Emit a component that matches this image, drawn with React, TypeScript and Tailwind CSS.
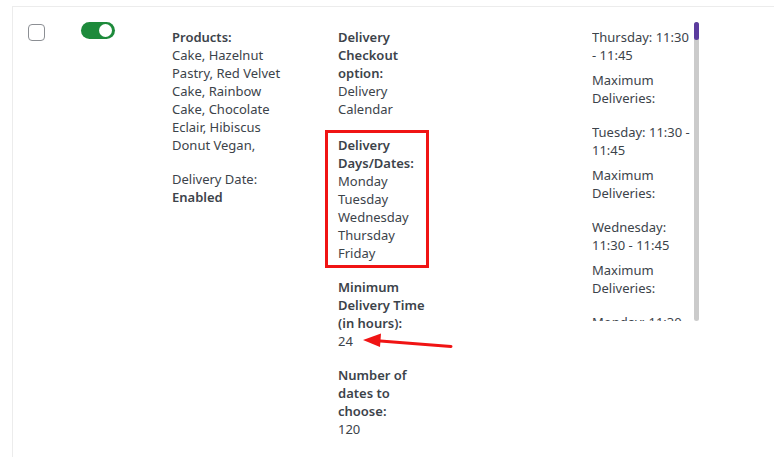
const schedule = [
  { slot: 'Thursday: 11:30 - 11:45' },
  { slot: 'Tuesday: 11:30 - 11:45' },
  { slot: 'Wednesday: 11:30 - 11:45' },
  { slot: 'Monday: 11:30 - 11:45' },
];

const days = ['Monday', 'Tuesday', 'Wednesday', 'Thursday', 'Friday'];

function Toggle() {
  return (
    <div className="flex h-[17px] w-[34px] items-center justify-end rounded-full bg-[#1d8a3b] pr-[3px]">
      <div className="h-[13px] w-[13px] rounded-full bg-white" />
    </div>
  );
}

export default function App() {
  return (
    <div
      className="relative h-[457px] w-[774px] overflow-hidden bg-white text-[13px] leading-[18px] text-[#3c434a]"
      style={{ fontFamily: '"Noto Sans", "Open Sans", sans-serif' }}
    >
      <div className="ml-[12px] mt-[6px] h-full border-l border-t border-[#ececec]">
        <div className="flex items-start pl-[15px]">
          {/* checkbox */}
          <div className="mt-[17px] h-[17px] w-[17px] rounded-[4px] border border-[#8c8f94] bg-white" />

          {/* enabled toggle */}
          <div className="ml-[36px] mt-[15px]">
            <Toggle />
          </div>

          {/* products */}
          <div className="ml-[57px] mt-[21px] w-[120px]">
            <div className="font-semibold">Products:</div>
            <div>Cake, Hazelnut Pastry, Red Velvet Cake, Rainbow Cake, Chocolate Eclair, Hibiscus Donut Vegan,</div>
            <div className="mt-[16px]">Delivery Date:</div>
            <div className="font-semibold">Enabled</div>
          </div>

          {/* delivery settings */}
          <div className="ml-[46px] mt-[21px] w-[92px]">
            <div className="font-semibold">Delivery Checkout option:</div>
            <div>Delivery Calendar</div>
            <div className="-ml-[13px] mt-[12px] w-[104px] border-[3px] border-[#f01414] px-[10px] py-[3px]">
              <div className="font-semibold">Delivery Days/Dates:</div>
              {days.map((d) => (
                <div key={d}>{d}</div>
              ))}
            </div>
            <div className="mt-[10px] font-semibold">Minimum Delivery Time (in hours):</div>
            <div>24</div>
            <div className="mt-[16px] font-semibold">Number of dates to choose:</div>
            <div>120</div>
          </div>

          {/* time slots */}
          <div className="ml-[162px] mt-[15px] flex">
            <div className="h-[299px] w-[102px] overflow-hidden pt-[6px]">
              {schedule.map((s) => (
                <div key={s.slot} className="mb-[16px]">
                  <div>{s.slot}</div>
                  <div className="mt-[7px]">Maximum Deliveries:</div>
                </div>
              ))}
            </div>
            <div className="h-[299px] w-[5px] rounded-full bg-[#cbcbcb]">
              <div className="h-[18px] w-[5px] rounded-full bg-[#5b3c9e]" />
            </div>
          </div>
        </div>
      </div>

      {/* annotation arrow */}
      <svg className="absolute left-[360px] top-[330px]" width="96" height="24" viewBox="0 0 96 24">
        <line x1="14" y1="10.5" x2="91" y2="16.5" stroke="#f01414" strokeWidth="3" strokeLinecap="round" />
        <polygon points="3,10 21,3.5 20,17" fill="#f01414" />
      </svg>
    </div>
  );
}
